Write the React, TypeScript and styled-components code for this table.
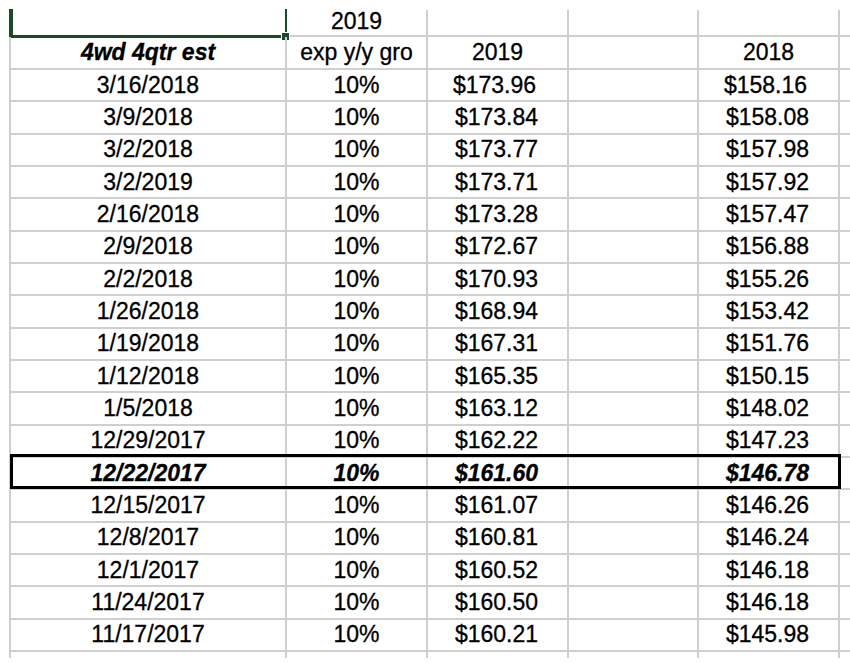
import React from 'react';
import styled, { createGlobalStyle } from 'styled-components';

const GRID = '#cfcfcf';
const SELECT = '#1b4a28';

const GlobalStyle = createGlobalStyle`
  html, body { margin: 0; padding: 0; background: #ffffff; }
  body {
    width: 850px;
    height: 663px;
    overflow: hidden;
    font-family: "Liberation Sans", Arial, sans-serif;
    color: #000;
  }
`;

const Sheet = styled.div`
  display: flex;
  flex-direction: column;
  padding: 10px 0 0 9px;
`;

const Row = styled.div<{ $h: number; $last?: boolean; $selected?: boolean }>`
  position: relative;
  box-sizing: border-box;
  display: grid;
  grid-template-columns: 276px 141px 141px 130px 141px 1fr;
  height: ${(p) => p.$h}px;
  border-left: 2px solid ${GRID};
  border-bottom: ${(p) => (p.$last ? 'none' : `2px solid ${GRID}`)};
  ${(p) =>
    p.$selected &&
    `
    &::after {
      content: '';
      position: absolute;
      left: -1px;
      right: 9px;
      top: -4px;
      bottom: -1px;
      border: 3px solid #000;
      pointer-events: none;
    }
  `}
`;

const Cell = styled.div<{
  $bold?: boolean;
  $italic?: boolean;
  $shift?: number;
  $noRight?: boolean;
  $raise?: number;
}>`
  position: relative;
  box-sizing: border-box;
  display: flex;
  align-items: center;
  justify-content: center;
  white-space: nowrap;
  font-size: 23px;
  line-height: 1;
  -webkit-text-stroke: 0.3px #000;
  font-weight: ${(p) => (p.$bold ? 700 : 400)};
  font-style: ${(p) => (p.$italic ? 'italic' : 'normal')};
  border-right: ${(p) => (p.$noRight ? 'none' : `2px solid ${GRID}`)};
  padding-left: ${(p) => Math.max(0, (p.$shift ?? 0) * 2)}px;
  padding-right: ${(p) => Math.max(0, -(p.$shift ?? 0) * 2)}px;
  padding-bottom: ${(p) => p.$raise ?? 0}px;
`;

const Selection = styled.div`
  position: absolute;
  left: -2px;
  right: -2px;
  top: -1px;
  bottom: -3px;
  border-left: 4px solid ${SELECT};
  border-right: 2px solid ${SELECT};
  border-bottom: 3px solid ${SELECT};
  pointer-events: none;
`;

const Handle = styled.span`
  position: absolute;
  right: -5px;
  bottom: -6px;
  width: 7px;
  height: 7px;
  background: ${SELECT};
  border: 1px solid #ffffff;
`;

type DataRow = { date: string; c: string; e: string; nudge?: number; selected?: boolean };

const rows: DataRow[] = [
  { date: '3/16/2018', c: '$173.96', e: '$158.16', nudge: -2 },
  { date: '3/9/2018', c: '$173.84', e: '$158.08' },
  { date: '3/2/2018', c: '$173.77', e: '$157.98' },
  { date: '3/2/2019', c: '$173.71', e: '$157.92' },
  { date: '2/16/2018', c: '$173.28', e: '$157.47' },
  { date: '2/9/2018', c: '$172.67', e: '$156.88' },
  { date: '2/2/2018', c: '$170.93', e: '$155.26' },
  { date: '1/26/2018', c: '$168.94', e: '$153.42' },
  { date: '1/19/2018', c: '$167.31', e: '$151.76' },
  { date: '1/12/2018', c: '$165.35', e: '$150.15' },
  { date: '1/5/2018', c: '$163.12', e: '$148.02' },
  { date: '12/29/2017', c: '$162.22', e: '$147.23' },
  { date: '12/22/2017', c: '$161.60', e: '$146.78', selected: true },
  { date: '12/15/2017', c: '$161.07', e: '$146.26' },
  { date: '12/8/2017', c: '$160.81', e: '$146.24' },
  { date: '12/1/2017', c: '$160.52', e: '$146.18' },
  { date: '11/24/2017', c: '$160.50', e: '$146.18' },
  { date: '11/17/2017', c: '$160.21', e: '$145.98' },
];

const MONEY_SHIFT = -1;

export default function App() {
  return (
    <>
      <GlobalStyle />
      <Sheet>
        <Row $h={27}>
          <Cell>
            <Selection>
              <Handle />
            </Selection>
          </Cell>
          <Cell $raise={2}>2019</Cell>
          <Cell />
          <Cell />
          <Cell />
          <Cell $noRight />
        </Row>
        <Row $h={33}>
          <Cell $bold $italic>4wd 4qtr est</Cell>
          <Cell>exp y/y gro</Cell>
          <Cell>2019</Cell>
          <Cell />
          <Cell>2018</Cell>
          <Cell $noRight />
        </Row>
        {rows.map((r) => {
          const shift = MONEY_SHIFT + (r.nudge ?? 0);
          return (
            <Row key={r.date + r.c} $h={32.33} $selected={r.selected}>
              <Cell $bold={r.selected} $italic={r.selected}>{r.date}</Cell>
              <Cell $bold={r.selected} $italic={r.selected}>10%</Cell>
              <Cell $bold={r.selected} $italic={r.selected} $shift={shift}>{r.c}</Cell>
              <Cell />
              <Cell $bold={r.selected} $italic={r.selected} $shift={shift}>{r.e}</Cell>
              <Cell $noRight />
            </Row>
          );
        })}
        <Row $h={6} $last>
          <Cell />
          <Cell />
          <Cell />
          <Cell />
          <Cell />
          <Cell $noRight />
        </Row>
      </Sheet>
    </>
  );
}
